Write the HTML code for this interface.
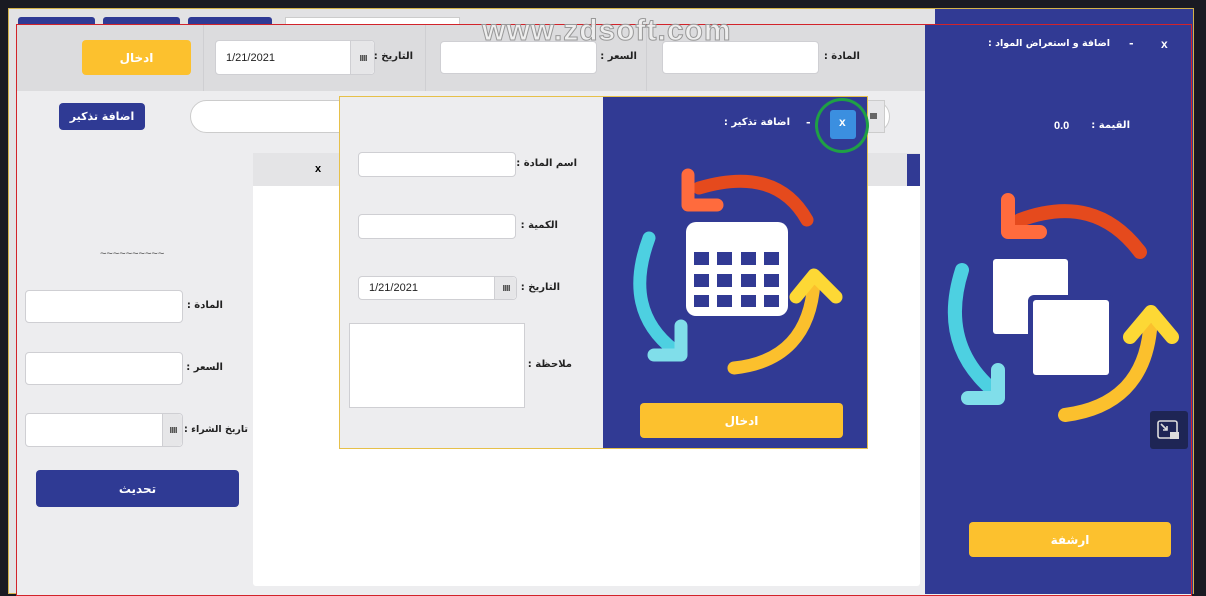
<!DOCTYPE html>
<html><head><meta charset="utf-8"><style>
*{margin:0;padding:0;box-sizing:border-box}
body{width:1206px;height:594px;overflow:hidden;position:relative;background:#1a1a22;font-family:"DejaVu Sans","Liberation Sans",sans-serif}
.a{position:absolute}
.lbl{position:absolute;font-size:10px;font-weight:bold;color:#222;direction:rtl;white-space:nowrap}
.in{position:absolute;background:#fff;border:1px solid #cfcfd3;border-radius:4px}
.cb{position:absolute;background:#e6e6e8;border-left:1px solid #cfcfd3;top:0;bottom:0;right:0;border-radius:0 4px 4px 0}
.cb:after{content:"";position:absolute;left:50%;top:50%;width:7px;height:6px;margin:-3px 0 0 -3px;background:repeating-linear-gradient(90deg,#555 0 1px,transparent 1px 2px),#999}
.dt{position:absolute;left:10px;top:50%;transform:translateY(-50%);font-family:"Liberation Sans",sans-serif;font-size:11px;color:#222}
.btn{position:absolute;border-radius:4px;display:flex;align-items:center;justify-content:center;font-size:12px;font-weight:bold;color:#fff}
.y{background:#fcc12e}
.b{background:#2f3a94}
.w{color:#fff}
</style></head><body>
<div class="a" style="left:8px;top:8px;width:1186px;height:586px;border:1px solid #d4b24a;background:#e2e2e4"></div>
<div class="a b" style="left:18px;top:17px;width:77px;height:10px;border-radius:3px"></div>
<div class="a b" style="left:103px;top:17px;width:77px;height:10px;border-radius:3px"></div>
<div class="a b" style="left:188px;top:17px;width:84px;height:10px;border-radius:3px"></div>
<div class="a" style="left:285px;top:17px;width:175px;height:10px;background:#fff;border:1px solid #ccc"></div>
<div class="a" style="left:935px;top:9px;width:258px;height:585px;background:#313a94"></div>
<div class="a" style="left:16px;top:24px;width:1176px;height:572px;border:1px solid #d2232a;background:#ededef"></div>
<div class="a" style="left:17px;top:25px;width:908px;height:66px;background:#dcdcde"></div>
<div class="a" style="left:203px;top:25px;width:1px;height:66px;background:#cfcfd2"></div>
<div class="a" style="left:425px;top:25px;width:1px;height:66px;background:#cfcfd2"></div>
<div class="a" style="left:646px;top:25px;width:1px;height:66px;background:#cfcfd2"></div>
<div class="a" style="left:925px;top:25px;width:266px;height:569px;background:#313a94"></div>

<div class="btn y" style="left:82px;top:40px;width:109px;height:35px">ادخال</div>
<div class="in" style="left:215px;top:40px;width:160px;height:35px"><span class="dt">1/21/2021</span><div class="cb" style="width:24px"></div></div>
<div class="lbl" style="right:793px;top:51px">التاريخ :</div>
<div class="in" style="left:440px;top:41px;width:157px;height:33px"></div>
<div class="lbl" style="right:569px;top:51px">السعر :</div>
<div class="in" style="left:662px;top:41px;width:157px;height:33px"></div>
<div class="lbl" style="right:346px;top:51px">المادة :</div>

<div class="btn b" style="left:59px;top:103px;width:86px;height:27px;font-size:11px">اضافة تذكير</div>
<div class="a" style="left:190px;top:100px;width:700px;height:33px;background:#fff;border:1px solid #ccc;border-radius:17px"></div>
<div class="a" style="left:862px;top:100px;width:23px;height:33px;background:#e6e6e8;border:1px solid #ccc"></div>
<div class="a" style="left:870px;top:113px;width:7px;height:6px;background:#666"></div>

<div class="a" style="left:253px;top:153px;width:667px;height:433px;background:#fff;border-radius:3px"></div>
<div class="a" style="left:253px;top:153px;width:667px;height:33px;background:#e4e4e6"></div>
<div class="a" style="left:315px;top:163px;font-family:'Liberation Sans';font-weight:bold;font-size:11px">x</div>
<div class="a" style="left:907px;top:154px;width:13px;height:32px;background:#313a94"></div>

<div class="a" style="left:100px;top:248px;font-family:'Liberation Sans';font-size:11px;color:#555">~~~~~~~~~~</div>
<div class="in" style="left:25px;top:290px;width:158px;height:33px"></div>
<div class="lbl" style="right:983px;top:300px">المادة :</div>
<div class="in" style="left:25px;top:352px;width:158px;height:33px"></div>
<div class="lbl" style="right:983px;top:362px">السعر :</div>
<div class="in" style="left:25px;top:413px;width:158px;height:34px"><div class="cb" style="width:20px"></div></div>
<div class="lbl" style="right:958px;top:424px;font-size:9.5px">تاريخ الشراء :</div>
<div class="btn b" style="left:36px;top:470px;width:203px;height:37px">تحديث</div>

<div class="a w" style="left:1161px;top:37px;font-family:'Liberation Sans';font-weight:bold;font-size:12px">x</div>
<div class="a w" style="left:1129px;top:37px;font-size:11px;font-weight:bold">-</div>
<div class="lbl w" style="right:96px;top:38px;color:#fff;font-size:9.5px">اضافة و استعراض المواد :</div>
<div class="lbl" style="right:76px;top:120px;color:#fff">القيمة :</div>
<div class="a w" style="left:1054px;top:120px;font-family:'Liberation Sans';font-size:11px;font-weight:bold">0.0</div>
<svg class="a" style="left:920px;top:170px" width="286" height="290">
<g fill="none" stroke-width="14" stroke-linecap="round">
<path d="M100 50 Q175 22 220 82" stroke="#e54a1d"/>
<path d="M88 30 V62 H120" stroke="#ff6b3d" stroke-linejoin="round"/>
<path d="M42 100 Q18 175 75 222" stroke="#4dd0e1"/>
<path d="M78 200 V228 H48" stroke="#80deea" stroke-linejoin="round"/>
<path d="M145 245 Q222 235 230 160" stroke="#fbc02d"/>
<path d="M210 167 L231 142 L252 167" stroke="#fdd835" stroke-linejoin="round"/>
</g>
<rect x="73" y="89" width="75" height="75" rx="3" fill="#fff"/>
<rect x="108" y="125" width="86" height="86" rx="6" fill="#313a94"/>
<rect x="113" y="130" width="76" height="75" rx="3" fill="#fff"/>
</svg>
<div class="btn y" style="left:969px;top:522px;width:202px;height:35px">ارشفة</div>
<div class="a" style="left:1150px;top:411px;width:38px;height:38px;background:#1e2555;border-radius:3px"></div>
<svg class="a" style="left:1155px;top:418px" width="28" height="24"><rect x="3" y="3" width="19" height="17" rx="2" fill="none" stroke="#ddd" stroke-width="1.6"/><path d="M6 6 L12 12 M12 8 V12 H8" stroke="#ddd" stroke-width="1.6" fill="none"/><rect x="15" y="14" width="9" height="7" fill="#ddd"/></svg>

<div class="a" style="left:339px;top:96px;width:529px;height:353px;border:1px solid #e6c04a;background:#ededef"></div>
<div class="a" style="left:603px;top:97px;width:264px;height:351px;background:#313a94"></div>
<div class="in" style="left:358px;top:152px;width:158px;height:25px"></div>
<div class="lbl" style="right:629px;top:158px">اسم المادة :</div>
<div class="in" style="left:358px;top:214px;width:158px;height:25px"></div>
<div class="lbl" style="right:648px;top:220px">الكمية :</div>
<div class="in" style="left:358px;top:276px;width:159px;height:24px"><span class="dt">1/21/2021</span><div class="cb" style="width:22px"></div></div>
<div class="lbl" style="right:646px;top:282px">التاريخ :</div>
<div class="a" style="left:349px;top:323px;width:176px;height:85px;background:#fff;border:1px solid #cfcfd3"></div>
<div class="lbl" style="right:634px;top:359px">ملاحظة :</div>
<div class="btn y" style="left:640px;top:403px;width:203px;height:35px">ادخال</div>
<div class="lbl" style="right:416px;top:117px;color:#fff">اضافة تذكير :</div>
<div class="a w" style="left:806px;top:116px;font-size:11px;font-weight:bold">-</div>
<div class="a" style="left:830px;top:110px;width:26px;height:29px;background:#3b8fe0;border-radius:3px"></div>
<div class="a w" style="left:839px;top:115px;font-family:'Liberation Sans';font-weight:bold;font-size:12px">x</div>
<div class="a" style="left:815px;top:98px;width:54px;height:55px;border:3px solid #1fa045;border-radius:50%"></div>
<svg class="a" style="left:604px;top:150px" width="264" height="240">
<g fill="none" stroke-width="13" stroke-linecap="round" stroke-linejoin="round">
<path d="M95 38 Q172 15 203 70" stroke="#e54a1d"/>
<path d="M84 25 V55 H113" stroke="#ff6b3d"/>
<path d="M45 88 Q18 160 70 200" stroke="#4dd0e1"/>
<path d="M77 176 V205 H50" stroke="#80deea"/>
<path d="M130 218 Q205 210 210 132" stroke="#fbc02d"/>
<path d="M192 147 L210 125 L232 147" stroke="#fdd835"/>
</g>
<rect x="82" y="72" width="102" height="94" rx="10" fill="#fff"/>
<g fill="#313a94">
<rect x="90" y="102" width="15" height="13"/><rect x="113" y="102" width="15" height="13"/><rect x="137" y="102" width="15" height="13"/><rect x="160" y="102" width="15" height="13"/>
<rect x="90" y="124" width="15" height="13"/><rect x="113" y="124" width="15" height="13"/><rect x="137" y="124" width="15" height="13"/><rect x="160" y="124" width="15" height="13"/>
<rect x="90" y="145" width="15" height="12"/><rect x="113" y="145" width="15" height="12"/><rect x="137" y="145" width="15" height="12"/><rect x="160" y="145" width="15" height="12"/>
</g>
</svg>
<div class="a" style="left:482px;top:14px;font-family:'Liberation Sans',sans-serif;font-weight:bold;font-size:30px;color:rgba(240,240,240,0.9);letter-spacing:1px;-webkit-text-stroke:1px #999">www.zdsoft.com</div>
</body></html>
